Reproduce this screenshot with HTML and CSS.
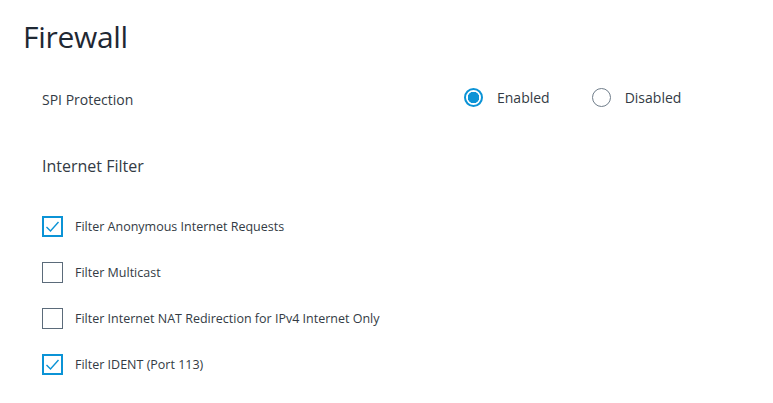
FILE: index.html
```html
<!DOCTYPE html>
<html lang="en">
<head>
	<meta charset="UTF-8">
	<meta name="viewport" content="width=device-width, initial-scale=1.0">
	<title>Firewall</title>
	<link rel="stylesheet" href="styles.css">
</head>
<body>
	<main class="page">
		<h1 class="title">Firewall</h1>
		<section class="settings">
			<div class="row-spi">
				<span class="label">SPI Protection</span>
				<div class="radios">
					<label class="radio">
						<span class="radio-mark radio-mark--on"></span>
						<span class="radio-text">Enabled</span>
					</label>
					<label class="radio">
						<span class="radio-mark"></span>
						<span class="radio-text">Disabled</span>
					</label>
				</div>
			</div>
			<h2 class="subtitle">Internet Filter</h2>
			<ul class="filters">
				<li class="filter">
					<span class="box box--on">
						<svg width="15" height="13" viewBox="0 0 15 13"><path d="M1.5 7 L5.5 11 L13.5 2" fill="none" stroke="#0b93d6" stroke-width="1.4"/></svg>
					</span>
					<span class="filter-text">Filter Anonymous Internet Requests</span>
				</li>
				<li class="filter">
					<span class="box"></span>
					<span class="filter-text">Filter Multicast</span>
				</li>
				<li class="filter">
					<span class="box"></span>
					<span class="filter-text">Filter Internet NAT Redirection for IPv4 Internet Only</span>
				</li>
				<li class="filter">
					<span class="box box--on">
						<svg width="15" height="13" viewBox="0 0 15 13"><path d="M1.5 7 L5.5 11 L13.5 2" fill="none" stroke="#0b93d6" stroke-width="1.4"/></svg>
					</span>
					<span class="filter-text">Filter IDENT (Port 113)</span>
				</li>
			</ul>
		</section>
	</main>
</body>
</html>
```

FILE: styles.css
```css
* {
	box-sizing: border-box;
	margin: 0;
	padding: 0;
}

body {
	font-family: "Open Sans", "Liberation Sans", sans-serif;
	color: #333b44;
	background: #fff;
}

.page {
	padding: 17px 0 0 23px;
}

.title {
	font-size: 30px;
	font-weight: 400;
	line-height: 40px;
	color: #1f2833;
	letter-spacing: -0.3px;
}

.settings {
	padding-left: 19px;
}

.row-spi {
	display: flex;
	align-items: center;
	margin-top: 30px;
	height: 24px;
}

.label {
	font-size: 14px;
	width: 422px;
}

.radios {
	display: flex;
	gap: 42px;
	margin-top: -4px;
}

.radio {
	display: flex;
	align-items: center;
	gap: 14px;
}

.radio-mark {
	width: 19px;
	height: 19px;
	border-radius: 50%;
	border: 1px solid #6f7d8a;
}

.radio-mark--on {
	border: 2px solid #0b93d6;
	background: radial-gradient(circle, #0b93d6 0 5.5px, #fff 6px);
}

.radio-text {
	font-size: 14px;
}

.subtitle {
	font-size: 16px;
	font-weight: 400;
	margin-top: 44px;
	line-height: 22px;
}

.filters {
	list-style: none;
	margin-top: 39px;
	display: flex;
	flex-direction: column;
	gap: 25px;
}

.filter {
	display: flex;
	align-items: center;
	height: 21px;
}

.box {
	width: 21px;
	height: 21px;
	border: 1.5px solid #5b6b7a;
	margin-right: 12px;
	display: flex;
	align-items: center;
	justify-content: center;
}

.box--on {
	border: 2px solid #0b93d6;
}

.filter-text {
	font-size: 12.5px;
}
```
